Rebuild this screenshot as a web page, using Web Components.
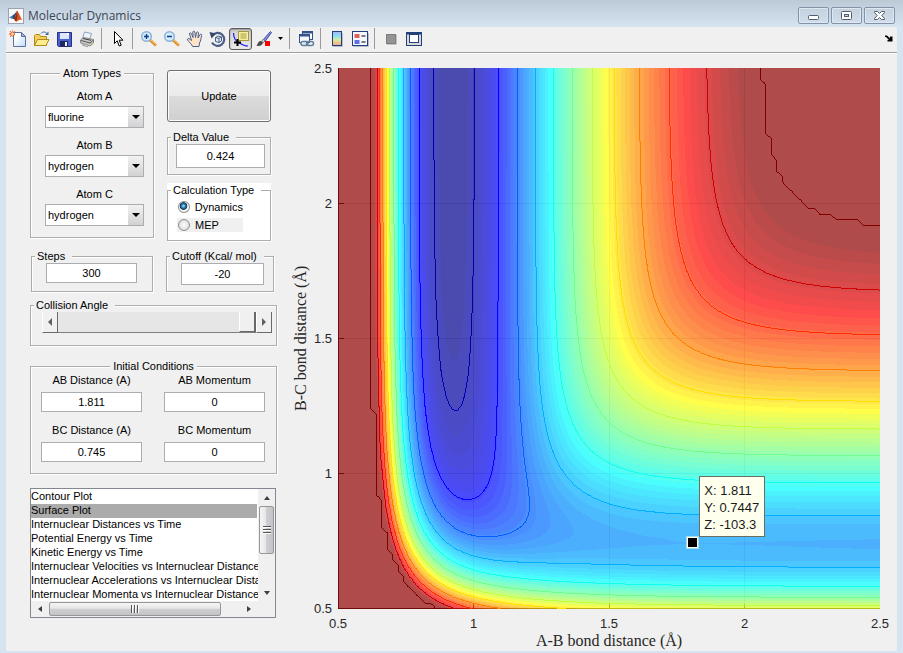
<!DOCTYPE html>
<html lang="en">
<head>
<meta charset="utf-8">
<title>Molecular Dynamics</title>
<style>
html,body{margin:0;min-height:100%}
body{font-family:"Liberation Sans",Arial,sans-serif;font-size:11px;line-height:14px;color:#000;background:#d6e4f2}
</style>
</head>
<body>
<md-app></md-app>

<template id="t-app">
<style>
:host{display:flex;flex-direction:column;min-height:100vh;box-sizing:border-box;padding:0 6px 2px;background:linear-gradient(#bccad7,#d6e4f2 27px)}
.figure{flex:1;display:flex;background:#f0f0f0}
aside{width:270px;flex:none;box-sizing:border-box;padding:12px 0 0 24px}
contour-plot{flex:1;min-width:0}
.cols{display:grid;grid-template-columns:124px auto;column-gap:13px;justify-content:start;align-items:start}
.stack{display:flex;flex-direction:column;gap:8px;width:104px;padding-top:4px}
.atoms{display:flex;flex-direction:column;gap:10px;padding:9px 9px 11px 14px}
.btn{height:52px;border:1px solid #707070;border-radius:3px;background:linear-gradient(#f2f2f2,#ebebeb 50%,#dcdcdc 50%,#cfcfcf);box-shadow:inset 0 0 0 1px #fcfcfc;font:inherit;color:#000;padding:0}
.delta{padding:0 5px 6px 8px}
.calc{background:#fff}
.radios{padding:1px 0 6px 9px;display:flex;flex-direction:column;align-items:flex-start}
.row2{margin-top:8px;grid-template-columns:122px 108px;padding-left:1px}
.steps{padding:0 15px 8px 14px}
.cut{padding:0 9px 6px 14px}
.angle{margin-top:6px}
.init{margin-top:13px}
.grid{display:grid;grid-template-columns:101px 101px;column-gap:22px;row-gap:11px;padding:0 0 11px 10px}
plot-list{margin-top:14px}
.wide{width:247px}
</style>
<title-bar caption="Molecular Dynamics"></title-bar>
<figure-toolbar></figure-toolbar>
<main class="figure">
<aside>
 <div class="cols">
  <group-box caption="Atom Types" centered>
   <div class="atoms">
    <atom-select label="Atom A" value="fluorine"></atom-select>
    <atom-select label="Atom B" value="hydrogen"></atom-select>
    <atom-select label="Atom C" value="hydrogen"></atom-select>
   </div>
  </group-box>
  <div class="stack">
   <button class="btn" type="button">Update</button>
   <group-box caption="Delta Value"><div class="delta"><value-field name="Delta Value" value="0.424" tall></value-field></div></group-box>
   <group-box caption="Calculation Type" class="calc"><div class="radios"><calc-choice></calc-choice></div></group-box>
  </div>
 </div>
 <div class="cols row2">
  <group-box caption="Steps"><div class="steps"><value-field name="Steps" value="300"></value-field></div></group-box>
  <group-box caption="Cutoff (Kcal/ mol)"><div class="cut"><value-field name="Cutoff" value="-20" mid></value-field></div></group-box>
 </div>
 <group-box class="angle wide" caption="Collision Angle"><angle-slider></angle-slider></group-box>
 <group-box class="init wide" caption="Initial Conditions" centered>
  <div class="grid">
   <value-field label="AB Distance (A)" value="1.811"></value-field>
   <value-field label="AB Momentum" value="0"></value-field>
   <value-field label="BC Distance (A)" value="0.745"></value-field>
   <value-field label="BC Momentum" value="0"></value-field>
  </div>
 </group-box>
 <plot-list></plot-list>
</aside>
<contour-plot></contour-plot>
</main>
</template>

<template id="t-title">
<style>
:host{display:flex;align-items:center;height:27px;padding:4px 2px 0;box-sizing:border-box;gap:4px}
svg{display:block}
h1{flex:1;margin:0;font:12px/16px "Open Sans","Noto Sans",sans-serif;color:#3c4654}
.b{display:flex;gap:2px}
button{width:31px;height:17px;padding:0;border:1px solid #8492a8;border-radius:2px;background:linear-gradient(#c4d1de,#d0deeb);box-shadow:inset 0 0 0 1px #dfe8f1;display:grid;place-items:center}
</style>
<svg width="16" height="16" viewBox="0 0 16 16"><rect x=".5" y=".5" width="15" height="15" fill="#fafafa" stroke="#9aa3ae"/><path d="M1 9.5 4.5 7.5 6.5 9 4.5 11z" fill="#4a7fb5"/><path d="M4.5 7.5 6.5 6 9 3 7.5 8.5 6.5 11 5 11z" fill="#2b4a72"/><path d="M9 2.5c1.5 1.5 3.5 7 5.5 9.5-1.5-.8-2.5-.8-3.5 0S9 13.5 8 13.5 6.500 11.500 6 11c1.500-1.500 2-6 3-8.500z" fill="#d9541e"/><path d="M9 2.500C8.500 6 8 9 6.200 11c1 1 1.300 2 2 2.400C9.500 10 9.500 6 9 2.500z" fill="#8f2a1a"/></svg>
<h1></h1>
<div class="b">
<button type="button" aria-label="Minimize"><svg width="13" height="11" viewBox="0 0 13 11"><rect x="1.500" y="5.500" width="10" height="4" rx="1" fill="#fff" stroke="#535d70"/></svg></button>
<button type="button" aria-label="Maximize"><svg width="13" height="11" viewBox="0 0 13 11"><rect x="1.500" y="1.500" width="10" height="8" rx="1" fill="#fff" stroke="#535d70"/><rect x="4.500" y="4.500" width="4" height="2" fill="#c8d5e2" stroke="#535d70"/></svg></button>
<button type="button" aria-label="Close"><svg width="13" height="11" viewBox="0 0 13 11"><path d="M1.500 1.500h3l2 2 2-2h3v1L8.800 5.500l2.700 3v1h-3l-2-2-2 2h-3v-1l2.700-3-2.700-3z" fill="#fff" stroke="#535d70"/></svg></button>
</div>
</template>

<template id="t-toolbar">
<style>
:host{display:flex;align-items:center;height:27px;box-sizing:border-box;background:#f0f0f0;border-bottom:1px solid #fff;box-shadow:inset 0 -1px #a0a0a0;padding:0 2px 3px 0}
button{width:23px;height:22px;padding:0;border:0;background:none;display:grid;place-items:center}
button[aria-pressed]{border:1px solid #5a5a5a;border-radius:3px;background:linear-gradient(#d0d0d0,#eaeaea);box-shadow:inset 0 1px 2px #999}
svg{display:block;overflow:visible}
i{width:8px;height:21px;background:linear-gradient(#9a9a9a,#9a9a9a) 3px 0/1px 100% no-repeat}
.caret{width:11px}
.dock{margin-left:auto;width:13px}
</style>
<button type="button" aria-label="New Figure"><svg width="18" height="18" viewBox="0 0 18 18"><defs><linearGradient id="pg" x2="1" y2="1"><stop offset=".3" stop-color="#fff"/><stop offset="1" stop-color="#bcdcf8"/></linearGradient></defs><path d="M4.500 2.500h8l4 4v10h-12z" fill="url(#pg)" stroke="#5c6f9e"/><path d="M12.500 2.500v4h4z" fill="#8fb6e6" stroke="#5c6f9e"/><circle cx="3.500" cy="4" r="2" fill="#ffd9a0" stroke="#e0582c"/><path d="M3.500.5v1M0 4h1M.8 1l1 1M6 1.200l-.8.800M1 7l.8-.8" stroke="#e0582c"/></svg></button>
<button type="button" aria-label="Open File"><svg width="18" height="18" viewBox="0 0 18 18"><path d="M2.500 15.500v-10l1-1h4l1 2h6v9z" fill="#f3cf5a" stroke="#b08a1c"/><path d="M2.500 15.500 5.500 9.500h11.500l-3 6z" fill="#ffec8f" stroke="#b08a1c"/><path d="M9 3.500c1.500-2 4-2 6 0" fill="none" stroke="#3f6da8"/><path d="M16.500 1.500v3.500h-3.500z" fill="#3f6da8"/></svg></button>
<button type="button" aria-label="Save Figure"><svg width="18" height="18" viewBox="0 0 18 18"><path d="M2.500 2.500h14v14h-13l-1-1z" fill="#4a5fd0" stroke="#26327e"/><rect x="5" y="3" width="9" height="6" fill="#dfe6fa"/><path d="M12 3h2v2h-2z" fill="#fff"/><rect x="5" y="11" width="8" height="5.500" fill="#20275c"/><rect x="10" y="12" width="2" height="4" fill="#f0f4ff"/></svg></button>
<button type="button" aria-label="Print Figure"><svg width="18" height="18" viewBox="0 0 18 18"><path d="M4.500 8.500 6.500 2l7 1.500-2 6z" fill="#eef5fc" stroke="#8fa3bd"/><path d="m2.500 10 3-2.500 10 2v3.500l-3.500 3-9.500-3z" fill="#c9c9c9" stroke="#8a8a8a"/><path d="m3 10.500 9 2.500 3.500-3" fill="none" stroke="#555"/><path d="m5 8.500 8 1.800" stroke="#444"/><path d="M13 13.500h1.500" stroke="#d8b83a"/><path d="m5.500 14 5 1.500-1 1.200-5-1.500z" fill="#f8f8f8" stroke="#999"/></svg></button>
<i></i>
<button type="button" aria-label="Edit Plot"><svg width="18" height="18" viewBox="0 0 18 18"><path d="M5.500 1.500v12l2.700-2.700 2 5.200 2-.8-2-5h3.800z" fill="#fff" stroke="#000"/></svg></button>
<i></i>
<button type="button" aria-label="Zoom In"><svg width="18" height="18" viewBox="0 0 18 18"><path d="m10 10 6 5.500" stroke="#e08f2c" stroke-width="3"/><path d="m10.500 9.500 6 5.500" stroke="#ffcf7d"/><circle cx="6.500" cy="6.500" r="4.800" fill="#d4ecfa" stroke="#8bb2da" stroke-width="1.500"/><path d="M4 6.500h5M6.500 4v5" stroke="#123f8a" stroke-width="1.500"/></svg></button>
<button type="button" aria-label="Zoom Out"><svg width="18" height="18" viewBox="0 0 18 18"><path d="m10 10 6 5.500" stroke="#e08f2c" stroke-width="3"/><path d="m10.500 9.500 6 5.500" stroke="#ffcf7d"/><circle cx="6.500" cy="6.500" r="4.800" fill="#d4ecfa" stroke="#8bb2da" stroke-width="1.500"/><path d="M4 6.500h5" stroke="#123f8a" stroke-width="1.500"/></svg></button>
<button type="button" aria-label="Pan"><svg width="18" height="18" viewBox="0 0 18 18"><path d="M6.500 16.500c-.5-2-3.500-4.500-5-6.500-.5-1.500 1-2 2-1l2 1.500L3.500 4c0-1.500 1.500-1.500 2-.3L7 7.500 6.800 2c.3-1.200 1.700-1.200 2 0L9.500 7.500l1-5c.5-1 1.800-.8 2 .3l-.5 5.200 2-3.500c.8-.8 2-.2 1.700 1-.7 2-.7 5-2.200 7.500l-.5 3.500z" fill="#fde3c4" stroke="#4a6190"/></svg></button>
<button type="button" aria-label="Rotate 3D"><svg width="18" height="18" viewBox="0 0 18 18"><path d="M3.500 5.500a6.500 6.500 0 1 1-.5 7" fill="none" stroke="#4b5f86" stroke-width="2.200"/><path d="M.5 2 7 3.500 2.500 8.500z" fill="#33456b"/><path d="M6.500 7.500 9 6l3.500 1v4L10 12.500l-3.500-1z" fill="#e4ecf8" stroke="#4b5f86"/><path d="m6.500 7.500 3.500 1 2.500-1.500M10 8.500v4" fill="none" stroke="#4b5f86"/></svg></button>
<button type="button" aria-label="Data Cursor" aria-pressed="true"><svg width="18" height="18" viewBox="0 0 18 18"><path d="M1.500 3c0 4 2 8 5.500 10s6 3 9 3" fill="none" stroke="#1a1aff" stroke-width="1.200"/><rect x="6.500" y="1.500" width="10" height="9" fill="#f7f0a0" stroke="#a89a3a"/><path d="M8.500 4h6M8.500 6h6M8.500 8h6" stroke="#a89a3a"/><path d="M2 12.500h7M5.500 9v7" stroke="#000" stroke-width="2"/></svg></button>
<button type="button" aria-label="Brush"><svg width="18" height="18" viewBox="0 0 18 18"><path d="m8 10 7.500-8.500 1 1L10 11.500z" fill="#8c98e8" stroke="#3a46a0"/><path d="M8.500 9 6.500 11l1.500 2 2-2z" fill="#ccc" stroke="#555" stroke-width=".6"/><path d="M1 15.500c2-.5 1.500-3.500 4-4.500 1.500-.3 3 1 2.800 2.300C7.300 15.500 4 16.500 1 15.500z" fill="#4a4a4a"/><rect x="10" y="11" width="5" height="5" fill="#f00"/></svg></button>
<button type="button" class="caret" aria-label="Brush colours"><svg width="5" height="3" viewBox="0 0 5 3"><path d="M0 0h5L2.500 3z"/></svg></button>
<i></i>
<button type="button" aria-label="Link Plot"><svg width="18" height="18" viewBox="0 0 18 18"><rect x="5.500" y="1.500" width="10" height="8" fill="#fff" stroke="#33538c"/><path d="M5 2.500h11" stroke="#33538c" stroke-width="2"/><rect x="2.500" y="4.500" width="10" height="8" fill="#f4f8fd" stroke="#33538c"/><path d="M2 5.500h11" stroke="#33538c" stroke-width="2"/><rect x="4" y="11.500" width="7" height="4" rx="2" fill="#e4ecf2" stroke="#5f7f9c" stroke-width="1.500"/><rect x="9.500" y="11.500" width="7" height="4" rx="2" fill="none" stroke="#5f7f9c" stroke-width="1.500"/></svg></button>
<i></i>
<button type="button" aria-label="Colorbar"><svg width="18" height="18" viewBox="0 0 18 18"><defs><linearGradient id="cb" x2="0" y2="1"><stop stop-color="#a5b4f5"/><stop offset=".35" stop-color="#8fe0ee"/><stop offset=".6" stop-color="#dcec9a"/><stop offset="1" stop-color="#f5a283"/></linearGradient></defs><rect x="4.500" y="1.500" width="9" height="14" fill="url(#cb)" stroke="#24407c"/><path d="M5 16.500h9.500V3" fill="none" stroke="#b5bccb"/></svg></button>
<button type="button" aria-label="Legend"><svg width="18" height="18" viewBox="0 0 18 18"><path d="M2 16.500h15.500V3" fill="none" stroke="#b5bccb"/><rect x="1.500" y="1.500" width="15" height="14" fill="#f4f7fd" stroke="#24407c"/><rect x="3.500" y="4" width="5" height="4" fill="#e0605a"/><rect x="3.500" y="10" width="5" height="4" fill="#5f6fe0"/><path d="M10.500 6h4M10.500 12h4" stroke="#000" stroke-width="1.200"/></svg></button>
<i></i>
<button type="button" aria-label="Hide Plot Tools"><svg width="18" height="18" viewBox="0 0 18 18"><path d="M5 14.500h9.500V5" fill="none" stroke="#c4c4c4"/><rect x="4.500" y="4.500" width="9" height="9" fill="#949494" stroke="#7e7e7e"/></svg></button>
<button type="button" aria-label="Show Plot Tools"><svg width="18" height="18" viewBox="0 0 18 18"><rect x="1.500" y="2.500" width="15" height="13" fill="#d8d8d2" stroke="#24407c"/><path d="M1 3.500h16" stroke="#24407c" stroke-width="2"/><rect x="4.500" y="4.500" width="9" height="8" fill="#fff" stroke="#24407c"/></svg></button>
<button type="button" class="dock" aria-label="Dock Figure"><svg width="8" height="7" viewBox="0 0 8 7"><path d="M0 .5h2l3 2.800V1.500H7.500V6.500H2.500V5L3.800 4.800 1 2H0z"/></svg></button>
</template>

<template id="t-group">
<style>
:host{display:block}
fieldset{margin:0;padding:0;min-width:0;border:1px solid #adadad;box-shadow:1px 1px #fff,inset 1px 1px #fff}
legend{margin-left:3px;padding:0 7px 0 2px;background:#f0f0f0;line-height:14px}
:host(.calc) legend{background:#fff}
:host([centered]) legend{margin:0 auto;padding:0 3px}
</style>
<fieldset><legend></legend><slot></slot></fieldset>
</template>

<template id="t-select">
<style>
:host{display:grid;grid-template-columns:1fr;row-gap:3px;text-align:center}
select{grid-area:2/1;height:22px;border:1px solid #abadb3;border-radius:0;margin:0;padding:0 18px 0 2px;appearance:none;background:#fff;font:inherit;color:#000;min-width:0}
span{grid-area:2/1;justify-self:end;width:15px;margin:1px;background:linear-gradient(#f2f2f2,#d2d2d2);display:grid;place-items:center;pointer-events:none}
</style>
<label for="s"></label>
<select id="s"><option>fluorine</option><option>hydrogen</option><option>deuterium</option><option>chlorine</option></select>
<span><svg width="8" height="4" viewBox="0 0 8 4"><path d="M0 0h8L4 4z"/></svg></span>
</template>

<template id="t-field">
<style>
:host{display:flex;flex-direction:column;gap:5px;text-align:center}
input{height:20px;box-sizing:border-box;width:100%;border:1px solid #abadb3;background:#fff;margin:0;padding:0;text-align:center;font:inherit;color:#000}
:host([tall]) input{height:24px}
:host([mid]) input{height:22px}
</style>
<label for="v"></label><input id="v" type="text">
</template>

<template id="t-choice">
<style>
:host{display:flex;flex-direction:column;gap:4px;padding:2px 0}
label{display:flex;align-items:center;gap:5px;width:66px;height:14px}
label + label{background:#f0f0f0}
input{appearance:none;width:12px;height:12px;margin:0 0 0 1px;border:1px solid #8e8f8f;border-radius:50%;background:radial-gradient(circle at 50% 50%,#fff,#d9d9d9 80%)}
input:checked{background:radial-gradient(circle at 45% 40%,#a8e0f4 0,#2f8fc4 22%,#12304e 42%,#fff 52%,#e4e4e4)}
</style>
<label><input type="radio" name="m" checked>Dynamics</label>
<label><input type="radio" name="m">MEP</label>
</template>

<template id="t-slider">
<style>
:host{display:flex;height:20px;padding:0 4px 13px 11px}
button{flex:none;width:16px;height:21px;padding:0;background:#f0f0f0;border:1px solid #fff;border-right:1px solid #696969;border-bottom:1px solid #696969;border-top:0;display:grid;place-items:center}
input{flex:1;min-width:0;appearance:none;margin:0;height:21px;background:#e6e6e6;border-bottom:1px solid #808080;box-sizing:border-box}
input::-webkit-slider-thumb{appearance:none;width:17px;height:20px;background:#f0f0f0;border-left:1px solid #fff;border-right:2px solid #696969;border-bottom:1px solid #696969;box-sizing:border-box}
</style>
<button type="button" aria-label="Decrease angle"><svg width="4" height="8" viewBox="0 0 4 8"><path d="M4 0v8L0 4z" fill="#606060"/></svg></button>
<input type="range" aria-label="Collision Angle" min="0" max="180" value="180">
<button type="button" aria-label="Increase angle"><svg width="4" height="8" viewBox="0 0 4 8"><path d="M0 0v8l4-4z" fill="#606060"/></svg></button>
</template>

<template id="t-list">
<style>
:host{display:grid;grid-template-columns:1fr 17px;grid-template-rows:112px 16px;width:244px;border:1px solid #828790;background:#fff;padding:0}
select{width:100%;height:112px;min-width:0;border:0;margin:0;padding:1px 1px 0 0;box-sizing:border-box;overflow:hidden;scrollbar-width:none;background:#fff;font:inherit;outline:0;border-radius:0;color:#000}
select::-webkit-scrollbar{display:none}
option{padding:0;height:14px;min-height:14px;line-height:14px;color:#000}
option:checked{background:#ababab linear-gradient(#ababab,#ababab);color:#000}
.c{background:#f0f0f0}
</style>
<select size="8" aria-label="Plot type">
<option>Contour Plot</option><option selected>Surface Plot</option><option>Internuclear Distances vs Time</option><option>Potential Energy vs Time</option><option>Kinetic Energy vs Time</option><option>Internuclear Velocities vs Internuclear Distance</option><option>Internuclear Accelerations vs Internuclear Distance</option><option>Internuclear Momenta vs Internuclear Distance</option>
</select>
<scroll-bar></scroll-bar>
<scroll-bar horizontal></scroll-bar>
<div class="c"></div>
</template>

<template id="t-scroll">
<style>
:host{display:flex;flex-direction:column;background:#f0f0f0;min-width:0}
button{flex:none;height:17px;width:100%;padding:0;border:0;background:none;display:grid;place-items:center}
.thumb{height:48px;box-sizing:border-box;border:1px solid #979797;border-radius:2px;background:linear-gradient(90deg,#f5f5f5,#e6e6e8 45%,#cfcfd3 50%,#c4c4c8);display:grid;place-items:center;margin:0 1px}
.rest{flex:1}
:host([horizontal]){flex-direction:row}
:host([horizontal]) button{width:18px;height:100%}
:host([horizontal]) .thumb{width:172px;height:auto;margin:1px 0;background:linear-gradient(#f5f5f5,#e6e6e8 45%,#cfcfd3 50%,#c4c4c8)}
:host([horizontal]) svg{transform:rotate(-90deg)}
</style>
<button type="button" aria-label="Back"><svg width="6" height="4" viewBox="0 0 6 4"><path d="M0 4h6L3 0z" fill="#404040"/></svg></button>
<div class="thumb"><svg width="8" height="8" viewBox="0 0 8 8"><path d="M0 .5h8M0 3.500h8M0 6.500h8" stroke="#555"/><path d="M0 1.500h8M0 4.500h8M0 7.500h8" stroke="#fff"/></svg></div>
<div class="rest"></div>
<button type="button" aria-label="Forward"><svg width="6" height="4" viewBox="0 0 6 4"><path d="M0 0h6L3 4z" fill="#404040"/></svg></button>
</template>

<template id="t-plot">
<style>
:host{display:grid;grid-template-columns:22px 21px 1fr;grid-template-rows:1fr 22px 20px;padding:14px 17px 0 15px;column-gap:0;color:#262626}
.yl,.xl{font:16px/20px "Liberation Serif","Times New Roman",serif;text-align:center;white-space:nowrap}
.yl{grid-area:1/1;writing-mode:vertical-rl;transform:rotate(180deg);justify-self:start}
.xl{grid-area:3/3}
.yt{grid-area:1/2;display:flex;flex-direction:column;justify-content:space-between;text-align:right;font-size:13px;line-height:0;padding:1px 2px 0 0}
.xt{grid-area:2/3;display:flex;justify-content:space-between;font-size:13px;line-height:14px;padding-top:8px}
.xt span{width:0;display:flex;justify-content:center}
.area{grid-area:1/3;position:relative;margin-left:4px;min-height:200px}
.xt,.xl{margin-left:4px}
canvas{position:absolute;inset:0;width:100%;height:100%;display:block}
.pt{position:absolute;width:9px;height:9px;margin:-6px 0 0 -6px;background:#000;border:1px solid #ffffdf;box-shadow:0 0 0 1px #ffffdf80}
.tip{position:absolute;margin-left:6px;margin-bottom:6px;box-sizing:border-box;padding:5px 4px 3px;border:1px solid #6e6e60;background:#ffffee;color:#1a1a1a;font-size:13px;line-height:17px;white-space:nowrap;min-width:66px}
</style>
<div class="yl">B-C bond distance (Å)</div>
<div class="yt"><span>2.5</span><span>2</span><span>1.5</span><span>1</span><span>0.5</span></div>
<div class="area"><canvas role="img" aria-label="Potential energy contours"></canvas><div class="pt"></div><div class="tip"><div>X: 1.811</div><div>Y: 0.7447</div><div>Z: -103.3</div></div></div>
<div class="xt"><span>0.5</span><span>1</span><span>1.5</span><span>2</span><span>2.5</span></div>
<div class="xl">A-B bond distance (Å)</div>
</template>

<script>
const define=(name,tpl,init)=>customElements.define(name,class extends HTMLElement{
  connectedCallback(){
    if(this.shadowRoot)return;
    const s=this.attachShadow({mode:'open'});
    s.append(document.getElementById(tpl).content.cloneNode(true));
    if(init)init.call(this,s);
  }
});

define('title-bar','t-title',function(s){s.querySelector('h1').textContent=this.getAttribute('caption')});
define('figure-toolbar','t-toolbar');
define('group-box','t-group',function(s){s.querySelector('legend').textContent=this.getAttribute('caption')});
define('atom-select','t-select',function(s){
  s.querySelector('label').textContent=this.getAttribute('label');
  s.querySelector('select').value=this.getAttribute('value');
});
define('value-field','t-field',function(s){
  const l=s.querySelector('label'),i=s.querySelector('input');
  i.value=this.getAttribute('value');
  if(this.hasAttribute('label'))l.textContent=this.getAttribute('label');
  else{l.remove();i.setAttribute('aria-label',this.getAttribute('name'))}
});
define('calc-choice','t-choice');
define('angle-slider','t-slider');
define('scroll-bar','t-scroll');
define('plot-list','t-list');

// LEPS potential energy surface of collinear F + H-H, in kcal/mol.
const HF={D:133.99479,B:2.27028,R:.92044,S:.18293}, HH={D:103.7211,B:1.98143,R:.73831,S:.17953};
const pair=(m,r)=>{const e=Math.exp(-m.B*(r-m.R)),k=m.D/4/(1+m.S);
  return[k*((3+m.S)*e*e-(2+6*m.S)*e),k*((1+3*m.S)*e*e-(6+2*m.S)*e)]};
const energy=(x,y)=>{const a=pair(HF,x),b=pair(HH,y),c=pair(HF,x+y);
  return a[0]+b[0]+c[0]-Math.sqrt(.5*((a[1]-b[1])**2+(b[1]-c[1])**2+(c[1]-a[1])**2))};
const LOW=-133.7,CUT=-20,N=100;
const ramp=k=>k<1||k>47?0:k<=16?k/16:k<=31?1:(48-k)/16;
const jet=i=>[ramp(i-23),ramp(i-7),ramp(i+9)].map(v=>v*255);
const step=v=>Math.max(0,Math.min(63,Math.floor((v-LOW)/(CUT-LOW)*64)));

define('contour-plot','t-plot',function(s){
  const cv=s.querySelector('canvas');
  const place=(el,x,y)=>{el.style.left=(x-.5)/2*100+'%';el.style[el.className=='tip'?'bottom':'top']=(el.className=='tip'?(y-.5)/2:(2.5-y)/2)*100+'%'};
  place(s.querySelector('.pt'),1.811,.7447);
  place(s.querySelector('.tip'),1.811,.7447);
  const grid=[];
  for(let j=0;j<=N;j++){grid.push([]);for(let i=0;i<=N;i++)grid[j].push(Math.min(CUT,energy(.5+i*.02,.5+j*.02)))}
  const shades=Array.from({length:64},(_,i)=>{const c=jet(i);if(i>62)c[0]=143;return c.map(v=>.7*v+75)});
  const draw=()=>{
    const W=cv.clientWidth,H=cv.clientHeight;
    if(!W||!H||(cv.width==W&&cv.height==H&&cv.done))return;
    cv.width=W;cv.height=H;cv.done=true;
    const g=cv.getContext('2d'),im=g.createImageData(W,H),d=im.data;
    const gx=[1,2,3].map(k=>Math.round(k*(W-1)/4)),gy=[1,2,3].map(k=>Math.round(k*(H-1)/4));
    for(let py=0;py<H;py++)for(let px=0;px<W;px++){
      const u=px/(W-1)*N,v=(H-1-py)/(H-1)*N,i=Math.min(N-1,u|0),j=Math.min(N-1,v|0),a=u-i,b=v-j;
      const e=(grid[j][i]*(1-a)+grid[j][i+1]*a)*(1-b)+(grid[j+1][i]*(1-a)+grid[j+1][i+1]*a)*b;
      const c=shades[step(e)];
      const onX=gx.includes(px),onY=gy.includes(py);
      const dark=px==0||py==H-1||(onY&&px<6)||(onX&&py>H-6);
      const sub=dark?65:(onX||onY)?10:0,o=(py*W+px)*4;
      d[o]=c[0]-sub;d[o+1]=c[1]-sub;d[o+2]=c[2]-sub;d[o+3]=255;
    }
    const line=(p,q,c)=>{
      const X=t=>t/N*(W-1),Y=t=>(N-t)/N*(H-1);
      const x0=X(p[0]),y0=Y(p[1]),dx=X(q[0])-x0,dy=Y(q[1])-y0,n=Math.max(1,Math.ceil(Math.max(Math.abs(dx),Math.abs(dy))));
      for(let k=0;k<=n;k++){const o=(Math.round(y0+dy*k/n)*W+Math.round(x0+dx*k/n))*4;d[o]=c[0];d[o+1]=c[1];d[o+2]=c[2]}
    };
    for(let L=-130;L<=CUT;L+=10){
      const c=jet(step(L));
      for(let j=0;j<N;j++)for(let i=0;i<N;i++){
        const k=[[i,j],[i+1,j],[i+1,j+1],[i,j+1]],hit=[];
        for(let m=0;m<4;m++){const p=k[m],q=k[(m+1)%4],vp=grid[p[1]][p[0]],vq=grid[q[1]][q[0]];
          if((vp>=L)!=(vq>=L)){const t=(L-vp)/(vq-vp);hit.push([p[0]+(q[0]-p[0])*t,p[1]+(q[1]-p[1])*t])}}
        for(let m=0;m+1<hit.length;m+=2)line(hit[m],hit[m+1],c);
      }
    }
    g.putImageData(im,0,0);
  };
  this.draw=draw;
  new ResizeObserver(draw).observe(cv);
});

define('md-app','t-app',function(s){s.querySelector('contour-plot').draw()});
</script>
</body>
</html>
